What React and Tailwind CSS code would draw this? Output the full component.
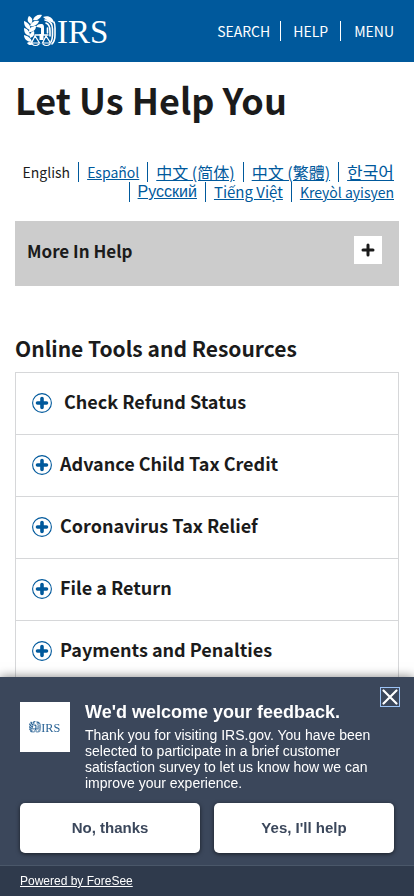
import { useState } from "react";

const languages = [
  { label: "Español", lang: "es", size: "text-sm leading-5" },
  { label: "中文 (简体)", lang: "zh-Hans", size: "text-base leading-5" },
  { label: "中文 (繁體)", lang: "zh-Hant", size: "text-base leading-5" },
  { label: "한국어", lang: "ko", size: "text-[17px] leading-5" },
  { label: "Русский", lang: "ru", size: "text-base leading-5 font-['Liberation_Sans',sans-serif]" },
  { label: "Tiếng Việt", lang: "vi", size: "text-[15px] leading-5" },
  { label: "Kreyòl ayisyen", lang: "ht", size: "text-sm leading-5" },
];

const tools = [
  { id: 1, title: "Check Refund Status", gap: "gap-3" },
  { id: 2, title: "Advance Child Tax Credit", gap: "gap-2" },
  { id: 3, title: "Coronavirus Tax Relief", gap: "gap-2" },
  { id: 4, title: "File a Return", gap: "gap-2" },
  { id: 5, title: "Payments and Penalties", gap: "gap-2" },
];

// laurel on the left, eagle holding the scales on the right
const Logo = ({ className }) => (
  <svg viewBox="0 -3 86 38" className={className} role="img" aria-label="IRS">
    <g fill="currentColor">
      <path d="M9 5C10 1 14 -1 18 0C16 4 13 6 9 5Z" />
      <path d="M5 1C9 3 9 6 7 9C3 7 3 4 5 1Z" />
      <path d="M6 11C7 7 11 5 15 6C14 9 11 12 6 11Z" />
      <path d="M0 6C5 8 7 11 6 15C1 13 0 10 0 6Z" />
      <path d="M5 17C5 13 8 11 12 11C12 15 9 17 5 17Z" />
      <path d="M0 13C4 14 6 17 6 21C1 20 0 17 0 13Z" />
      <path d="M6 23C5 19 7 17 10 16C11 20 9 22 6 23Z" />
      <path d="M0 20C4 21 7 23 8 27C3 27 0 24 0 20Z" />
      <path d="M3 28C5 26 8 27 9 29C7 31 4 30 3 28Z" />
      <path d="M12 12C13 10 14 9 17 9C20 9 20 11 20 13V20H17V13C15 12 13 12 12 12Z" />
      <path d="M15.5 19H19.5V25H15.5Z" />
      <path d="M19 2C24 0 29 2 30 8C26 7 22 5 19 2Z" />
    </g>
    <g fill="none" stroke="currentColor" strokeWidth="1.6" strokeLinecap="round">
      <path d="M30 7C31 9 31 11 31 13V20C31 24 30 27 28 29" />
      <path d="M21 5C26 6 28.500 9 28.500 14V20C28.500 23 28 25 27 27" />
      <path d="M22 8C25 9 26 12 26 16V21" />
      <path d="M23.500 13V18" />
      <path d="M11 20H24" strokeWidth="1.3" />
      <path d="M11 21L7.500 28H15.500ZM22 21L18.500 28H26.500Z" strokeWidth="1.2" />
      <path d="M8 29C10 31 13 31 15 29M19 29C21 31 24 31 26 29" strokeWidth="1.2" />
    </g>
    <text x="33" y="28" fontSize="33" fill="currentColor" fontFamily="Liberation Serif, serif">
      IRS
    </text>
  </svg>
);

const PlusCircle = () => (
  <svg viewBox="0 0 20 20" className="size-5 shrink-0 text-[#00599c]" aria-hidden="true">
    <circle cx="10" cy="10" r="9.4" fill="none" stroke="currentColor" strokeWidth="1.1" />
    <path d="M10 5.500V14.500M5.500 10H14.500" stroke="currentColor" strokeWidth="3.6" strokeLinecap="round" />
  </svg>
);

const Header = () => (
  <header className="flex h-[62px] items-center justify-between bg-[#00599c] pr-5 pl-6 text-white">
    <a href="#home">
      <Logo className="h-[38px] w-[86px]" />
    </a>
    <nav className="flex text-sm leading-5">
      <button className="pr-[10px]">SEARCH</button>
      <a href="#help" className="border-x border-white px-3">HELP</a>
      <button className="pl-[13px]">MENU</button>
    </nav>
  </header>
);

const Languages = () => (
  <ul className="mt-[39px] flex flex-wrap justify-end pr-[5px] text-sm leading-5">
    <li className="pr-2">English</li>
    {languages.map(({ label, lang, size }) => (
      <li key={lang} className="flex border-l border-[#00599c] px-2 last:pr-0 nth-5:pr-0">
        <a href={`#${lang}`} lang={lang} className={`text-[#00599c] underline ${size}`}>
          {label}
        </a>
      </li>
    ))}
  </ul>
);

const Feedback = ({ onClose }) => (
  <section
    aria-label="Feedback"
    className="fixed inset-x-0 bottom-0 bg-[#3b475b] font-['Liberation_Sans',sans-serif] text-white shadow-[0_0_10px_rgba(0,0,0,0.5)]"
  >
    <button
      onClick={onClose}
      aria-label="Close"
      className="absolute top-[10px] right-[14px] size-5 border border-[#9cc3f5]"
    >
      <svg viewBox="0 0 18 18" className="size-full" aria-hidden="true">
        <path d="M2.500 2.500L15.500 15.500M15.500 2.500L2.500 15.500" stroke="currentColor" strokeWidth="2.2" strokeLinecap="round" />
      </svg>
    </button>
    <div className="flex gap-[15px] px-5 pt-6">
      <div className="mt-px flex size-[50px] shrink-0 items-center justify-center bg-white text-[#2b6496]">
        <Logo className="w-8" />
      </div>
      <div>
        <h2 className="text-lg leading-[22px] font-bold">We'd welcome your feedback.</h2>
        <p className="mt-1 text-sm leading-4">
          Thank you for visiting IRS.gov. You have been selected to participate in a brief customer
          satisfaction survey to let us know how we can improve your experience.
        </p>
      </div>
    </div>
    <div className="mt-3 grid grid-cols-2 gap-[14px] px-5 pb-3 text-[15px] font-bold text-[#3b475b]">
      <button onClick={onClose} className="h-[50px] rounded-[5px] bg-white shadow-[0_1px_4px_rgba(0,0,0,0.6)]">
        No, thanks
      </button>
      <button onClick={onClose} className="h-[50px] rounded-[5px] bg-white shadow-[0_1px_4px_rgba(0,0,0,0.6)]">
        Yes, I'll help
      </button>
    </div>
    <div className="border-t border-[#4a5769] bg-[#2f3a4c] px-5 py-[7px] text-xs leading-4">
      <a href="#foresee" className="underline">Powered by ForeSee</a>
    </div>
  </section>
);

const App = () => {
  const [showFeedback, setShowFeedback] = useState(true);

  return (
    <div className="min-h-screen bg-white font-['Noto_Sans_CJK_SC',sans-serif] text-[#1b1b1b]">
      <Header />
      <main className="px-[15px]">
        <h1 className="pt-[13px] text-4xl leading-[48px] font-bold">Let Us Help You</h1>
        <Languages />
        <div className="mt-[19px] flex h-[65px] items-start justify-between bg-[#cccccc] pt-[15px] pr-[17px] pl-3">
          <h2 className="text-[17px] leading-[30px] font-bold">More In Help</h2>
          <button aria-label="Expand More In Help" className="flex size-7 items-center justify-center bg-white">
            <svg viewBox="0 0 14 14" className="mb-px size-[14px]" aria-hidden="true">
              <path d="M7 2V12M2 7H12" stroke="currentColor" strokeWidth="3" strokeLinecap="round" />
            </svg>
          </button>
        </div>
        <h2 className="mt-12 text-[21px] leading-7 font-bold">Online Tools and Resources</h2>
        <div className="mt-[10px] border border-[#d6d7d9]">
          {tools.map((tool) => (
            <h3 key={tool.id} className="border-b border-[#d6d7d9] last:border-b-0">
              <button className={`flex h-[61px] w-full items-center px-4 pb-[2px] text-lg font-bold ${tool.gap}`}>
                <PlusCircle />
                <span className="pb-[3px]">{tool.title}</span>
              </button>
            </h3>
          ))}
        </div>
      </main>
      {showFeedback && <Feedback onClose={() => setShowFeedback(false)} />}
    </div>
  );
};

export default App;
